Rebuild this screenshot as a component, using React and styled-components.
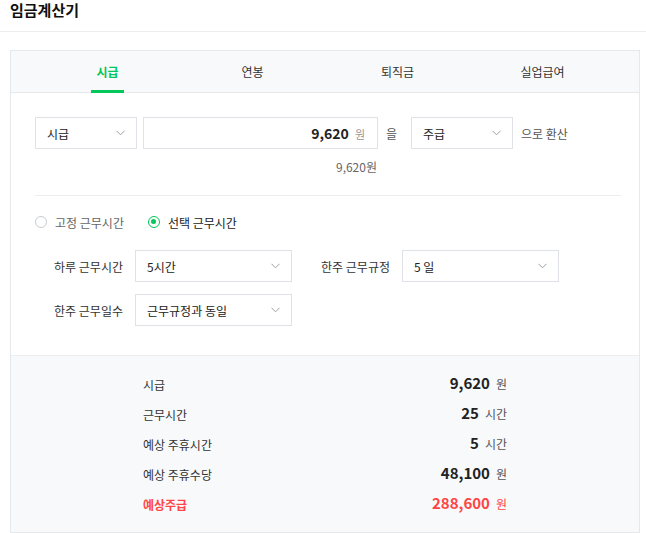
import React from "react";
import styled, {createGlobalStyle} from "styled-components";

const GlobalStyle = createGlobalStyle`
    html, body {
        margin: 0;
        padding: 0;
        background: #fff;
    }
    body {
        font-family: "Noto Sans CJK KR", "Noto Sans", sans-serif;
        color: #222;
        -webkit-font-smoothing: antialiased;
    }
`;

const Header = styled.div`
    height: 32px;
    padding: 2px 10px 0;
    border-bottom: 1px solid #eceef1;
    box-sizing: border-box;
`;

const Title = styled.h1`
    margin: 0;
    font-size: 15px;
    line-height: 15px;
    font-weight: 700;
    color: #111;
`;

const Card = styled.div`
    width: 630px;
    margin: 18px 0 0 10px;
    border: 1px solid #e6e9ec;
    border-bottom: none;
    box-sizing: border-box;
`;

const TabBar = styled.div`
    display: flex;
    padding: 0 24px;
    height: 41px;
    background: #f8f9fb;
    border-bottom: 1px solid #e6e9ec;
`;

const Tab = styled.div`
    flex: 1;
    display: flex;
    justify-content: center;
`;

const TabLabel = styled.div`
    display: flex;
    align-items: center;
    padding: 2px 5px 0;
    margin-bottom: -1px;
    font-size: 12px;
    color: ${p => p.active ? "#03c75a" : "#333"};
    font-weight: ${p => p.active ? 700 : 400};
    border-bottom: 3px solid ${p => p.active ? "#03c75a" : "transparent"};
`;

const Settings = styled.div`
    padding: 24px 18px 29px 24px;
`;

const ConvertRow = styled.div`
    display: flex;
    align-items: center;
`;

const SelectBox = styled.div`
    display: flex;
    align-items: center;
    justify-content: space-between;
    width: ${p => p.width}px;
    height: 32px;
    padding: 0 11px 0 11px;
    border: 1px solid #dfe3e7;
    box-sizing: border-box;
    font-size: 12px;
    color: #222;
    background: #fff;
`;

const AmountInput = styled.div`
    display: flex;
    align-items: center;
    justify-content: flex-end;
    gap: 6px;
    width: 235px;
    height: 32px;
    margin: 0 8px 0 6px;
    padding: 0 12px;
    border: 1px solid #dfe3e7;
    box-sizing: border-box;
`;

const Amount = styled.span`
    font-size: 14px;
    font-weight: 700;
    color: #222;
`;

const Unit = styled.span`
    font-size: 11px;
    color: #999;
    padding-top: 2px;
`;

const Word = styled.span`
    font-size: 12px;
    color: #555;
    margin: ${p => p.margin || "0"};
`;

const Converted = styled.div`
    width: 342px;
    text-align: right;
    font-size: 12px;
    color: #666;
    margin-top: 9px;
    line-height: 18px;
`;

const Divider = styled.div`
    height: 1px;
    background: #eceef1;
    margin: 19px 0 17px;
`;

const RadioRow = styled.div`
    display: flex;
    align-items: center;
    gap: 24px;
    height: 18px;
`;

const RadioItem = styled.label`
    display: flex;
    align-items: center;
    gap: 8px;
    font-size: 12px;
    color: ${p => p.checked ? "#222" : "#666"};
`;

const RadioCircle = styled.span`
    position: relative;
    width: 12px;
    height: 12px;
    border-radius: 50%;
    box-sizing: border-box;
    border: ${p => p.checked ? "1.5px solid #03c75a" : "1px solid #c8ccd0"};
    background: #fff;

    &::after {
        content: "";
        display: ${p => p.checked ? "block" : "none"};
        position: absolute;
        left: 2px;
        top: 2px;
        width: 5px;
        height: 5px;
        border-radius: 50%;
        background: #03c75a;
    }
`;

const FormGrid = styled.div`
    display: grid;
    grid-template-columns: 100px 157px 110px 157px;
    row-gap: 12px;
    margin-top: 19px;
    align-items: center;
`;

const FieldLabel = styled.div`
    text-align: right;
    padding-right: 12px;
    font-size: 12px;
    color: #333;
`;

const Results = styled.div`
    background: #f8f9fb;
    border-top: 1px solid #eceef1;
    border-bottom: 1px solid #e6e9ec;
    padding: 11px 0 15px;
`;

const ResultList = styled.div`
    width: 364px;
    margin: 0 auto;
`;

const ResultRow = styled.div`
    display: flex;
    align-items: center;
    justify-content: space-between;
    height: 30px;
    color: ${p => p.highlight ? "#ff4545" : "#333"};
`;

const ResultLabel = styled.span`
    font-size: 12px;
    font-weight: ${p => p.highlight ? 700 : 400};
    padding-top: 4px;
`;

const ResultValue = styled.span`
    display: flex;
    align-items: baseline;
    gap: 6px;
`;

const ResultNumber = styled.span`
    font-size: 15px;
    font-weight: 700;
    color: ${p => p.highlight ? "#ff4545" : "#222"};
`;

const ResultUnit = styled.span`
    font-size: 12px;
    color: ${p => p.highlight ? "#ff4545" : "#555"};
`;

const Chevron = () => (
    <svg width="9" height="6" viewBox="0 0 9 6">
        <polyline points="0.5,0.8 4.5,4.8 8.5,0.8" fill="none" stroke="#9a9ea3" strokeWidth="1"/>
    </svg>
);

const Select = ({width, children}) => (
    <SelectBox width={width}>
        <span>{children}</span>
        <Chevron/>
    </SelectBox>
);

const tabs = ["시급", "연봉", "퇴직금", "실업급여"];

const results = [
    {label: "시급", value: "9,620", unit: "원"},
    {label: "근무시간", value: "25", unit: "시간"},
    {label: "예상 주휴시간", value: "5", unit: "시간"},
    {label: "예상 주휴수당", value: "48,100", unit: "원"},
    {label: "예상주급", value: "288,600", unit: "원", highlight: true},
];

export default function App() {
    return (
        <>
            <GlobalStyle/>
            <Header>
                <Title>임금계산기</Title>
            </Header>
            <Card>
                <TabBar>
                    {tabs.map((t, i) => (
                        <Tab key={t}>
                            <TabLabel active={i === 0}>{t}</TabLabel>
                        </Tab>
                    ))}
                </TabBar>

                <Settings>
                    <ConvertRow>
                        <Select width={102}>시급</Select>
                        <AmountInput>
                            <Amount>9,620</Amount>
                            <Unit>원</Unit>
                        </AmountInput>
                        <Word margin="0 14px 0 0">을</Word>
                        <Select width={102}>주급</Select>
                        <Word margin="0 0 0 8px">으로 환산</Word>
                    </ConvertRow>
                    <Converted>9,620원</Converted>

                    <Divider/>

                    <RadioRow>
                        <RadioItem>
                            <RadioCircle/>
                            고정 근무시간
                        </RadioItem>
                        <RadioItem checked>
                            <RadioCircle checked/>
                            선택 근무시간
                        </RadioItem>
                    </RadioRow>

                    <FormGrid>
                        <FieldLabel>하루 근무시간</FieldLabel>
                        <Select width={157}>5시간</Select>
                        <FieldLabel>한주 근무규정</FieldLabel>
                        <Select width={157}>5 일</Select>
                        <FieldLabel>한주 근무일수</FieldLabel>
                        <Select width={157}>근무규정과 동일</Select>
                    </FormGrid>
                </Settings>

                <Results>
                    <ResultList>
                        {results.map(r => (
                            <ResultRow key={r.label} highlight={r.highlight}>
                                <ResultLabel highlight={r.highlight}>{r.label}</ResultLabel>
                                <ResultValue>
                                    <ResultNumber highlight={r.highlight}>{r.value}</ResultNumber>
                                    <ResultUnit highlight={r.highlight}>{r.unit}</ResultUnit>
                                </ResultValue>
                            </ResultRow>
                        ))}
                    </ResultList>
                </Results>
            </Card>
        </>
    );
}
